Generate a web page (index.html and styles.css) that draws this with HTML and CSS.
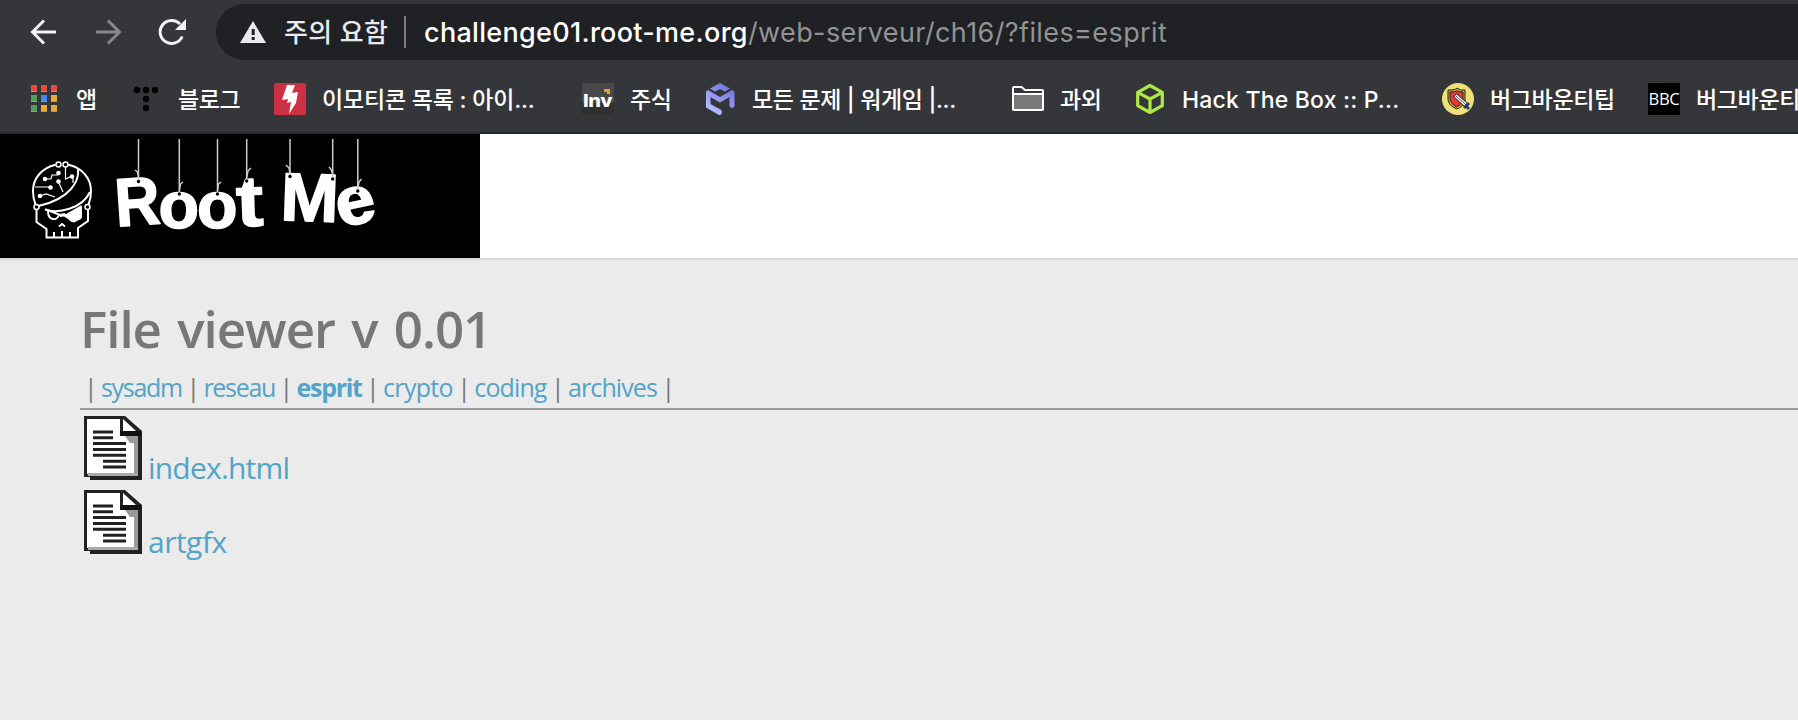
FILE: index.html
```html
<!DOCTYPE html>
<html lang="ko">
<head>
<meta charset="UTF-8" />
<title>File viewer v 0.01</title>
<link rel="stylesheet" href="styles.css">
</head>
<body>
  <header class="browser">
    <div class="toolbar">
      <svg class="nav-icon" viewBox="0 0 32 32"><path d="M28 16H5M16 4.500L4.500 16L16 27.500" /></svg>
      <svg class="nav-icon disabled" viewBox="0 0 32 32"><path d="M4 16H27M16 4.500L27.500 16L16 27.500" /></svg>
      <svg class="nav-icon" viewBox="0 0 32 32"><path d="M26.200 20.500A11.500 11.500 0 1 1 24 8" /><path class="solid" d="M30 3V14H19Z" /></svg>
      <div class="omnibox">
        <svg class="warning" viewBox="0 0 26 22"><path fill="#e8eaed" d="M13 0L26 22H0Z" /><path fill="#202124" d="M11.700 8h3v6h-3zM11.700 16h3v3h-3z" /></svg>
        <span class="security">주의 요함</span>
        <span class="divider"></span>
        <span class="url"><span class="domain">challenge01.root-me.org</span><span class="path">/web-serveur/ch16/?files=esprit</span></span>
      </div>
    </div>

    <nav class="bookmarks">
      <a class="bookmark apps">
        <svg viewBox="0 0 32 32">
          <path fill="#9c9c9c" d="M3 8h6v1H3zM13 8h6v1h-6zM23 8h6v1h-6zM3 18h6v1H3zM13 18h6v1h-6zM23 18h6v1h-6zM3 28h6v1H3zM13 28h6v1h-6zM23 28h6v1h-6z" />
          <path fill="#ea4b3c" d="M3 2h6v6H3zM13 2h6v6h-6zM23 2h6v6h-6z" />
          <path fill="#539c60" d="M3 12h6v6H3zM3 22h6v6H3z" />
          <path fill="#4389f1" d="M13 12h6v6h-6z" />
          <path fill="#e9a83a" d="M23 12h6v6h-6zM13 22h6v6h-6zM23 22h6v6h-6z" />
        </svg>
        <span>앱</span>
      </a>
      <a class="bookmark blog">
        <svg viewBox="0 0 32 32"><circle cx="7" cy="7" r="3.200" /><circle cx="16" cy="7" r="3.200" /><circle cx="25" cy="7" r="3.200" /><circle cx="16" cy="16" r="3.200" /><circle cx="16" cy="25" r="3.200" /></svg>
        <span>블로그</span>
      </a>
      <a class="bookmark wide emoticon">
        <svg viewBox="0 0 32 32"><rect width="32" height="32" rx="2" fill="#cb3143" /><path fill="#fff" d="M13 2H21L18 10L24 9L22 20L15 31L17 19L13 20L14 16L8 17Z" /></svg>
        <span>이모티콘 목록 : 아이...</span>
      </a>
      <a class="bookmark stock">
        <svg viewBox="0 0 32 32"><rect width="32" height="32" fill="#484848" /><rect y="20" width="32" height="12" fill="#303030" /><text class="inv" x="1" y="24" textLength="29" lengthAdjust="spacingAndGlyphs">Inv</text><path fill="#f0a02f" d="M22 6h6v5h-3v-2h-3z" /></svg>
        <span>주식</span>
      </a>
      <a class="bookmark wide wargame">
        <svg viewBox="0 0 32 32">
          <defs><linearGradient id="cube" x1="0" y1="1" x2="0.700" y2="0"><stop offset="0" stop-color="#bdd4ff" /><stop offset="0.500" stop-color="#9c9bf5" /><stop offset="1" stop-color="#6c76e2" /></linearGradient></defs>
          <path fill="url(#cube)" d="M16 0L26 5.500L21 8.500L16 6L11 8.500L6 5.500ZM2 8.500L4 7L16 14L28 7L30.500 8.500V23Q28 27 25.500 23V14L16 19.500L6.500 14V21L17.500 27Q19 32 15 32L2 24.500Z" />
        </svg>
        <span>모든 문제 | 워게임 |...</span>
      </a>
      <a class="bookmark tutor">
        <svg viewBox="0 0 32 32"><path fill="#77787a" d="M1 12h30v15H1z" /><path fill="none" stroke="#fff" stroke-width="2" d="M1 26V5Q1 4 2 4H9.500L13 7H30Q31 7 31 8V26Q31 27 30 27H2Q1 27 1 26ZM1 11H31" /></svg>
        <span>과외</span>
      </a>
      <a class="bookmark wide htb">
        <svg viewBox="0 0 32 32"><path fill="none" stroke="#aeea45" stroke-width="3.200" stroke-linejoin="round" d="M16 2.500L28.300 9.300V22.700L16 29.500L3.700 22.700V9.300ZM3.700 9.300L16 16L28.300 9.300M16 16V29.500" /></svg>
        <span>Hack The Box :: P...</span>
      </a>
      <a class="bookmark bounty">
        <svg viewBox="0 0 32 32">
          <circle cx="16" cy="16" r="16" fill="#efe078" />
          <path fill="#c5aa29" stroke="#222" stroke-width="1" d="M6 7Q14 7 15 5Q18 8 23 7V18Q21 24 14.500 26Q6 22 6 16Z" />
          <path fill="#e13a36" stroke="#222" stroke-width="1" d="M8 9Q14 9 15 8Q17 9 21 9V17Q19 22 14.500 24Q8 20 8 15Z" />
          <path stroke="#222" stroke-width="5" d="M13 12L25 23" /><path stroke="#fff" stroke-width="3.200" d="M13.500 12.500L24 22" /><path stroke="#222" stroke-width="0.800" d="M14 13L24 22" />
          <path stroke="#273b7a" stroke-width="3" d="M22 25L27 20M24 23L27 26" />
        </svg>
        <span>버그바운티팁</span>
      </a>
      <a class="bookmark bounty">
        <svg viewBox="0 0 32 32"><rect width="32" height="32" /><text class="bbc" x="0.500" y="22" textLength="31" lengthAdjust="spacingAndGlyphs">BBC</text></svg>
        <span>버그바운티</span>
      </a>
    </nav>
  </header>

  <div class="banner">
    <svg class="logo" viewBox="0 0 480 124">
      <rect width="480" height="124" />
      <!-- skull -->
      <g class="line">
        <path d="M55.500 30.800C42 34 33 44 33 57C33 62 34 67 35.500 70.500M68.500 30.800C83 34 91 45 91 57C91 63 90 67 88.500 70.500" />
        <path d="M38.500 72C52 69 64 63 71 55C77 48 79 42 78 35M45 75.500C58 80 82 75 90 58" />
        <path d="M36.500 76V88L46.500 95V103.500H78V94L88 87V76M54 98V103M62 97V103M70 98V103" />
        <path d="M59 92.500L62 90L65 92.500" />
        <path d="M46 75.500L60 81L65 80M48 77C48 87 57 87 59 81" />
      </g>
      <path fill="#fff" d="M60 80L66 80L80 72Q82 70 82 74V82Q82 85 79 86L74 88.500Q71 88.500 68 85L64 82.500L60 83Z" />
      <g class="thin">
        <path d="M45 45H51L52 41H58.500M35 53H50M65.500 33V45L71 42.500M58.500 48L63 58M40 62L46 60L55 63M73 43V49" />
      </g>
      <g fill="#fff"><circle cx="45" cy="45" r="2.300" /><circle cx="58.500" cy="39" r="2.300" /><circle cx="50.500" cy="53.500" r="2.300" /><circle cx="58.500" cy="47.500" r="2.300" /><circle cx="40" cy="62" r="2.300" /><circle cx="72" cy="42.500" r="2.300" /></g>
      <g class="node"><circle cx="58.500" cy="30.500" r="2.500" /><circle cx="65.500" cy="30.500" r="2.500" /><circle cx="36.500" cy="73" r="2.500" /><circle cx="87.500" cy="73" r="2.500" /></g>
      <!-- hanging letters -->
      <g class="letters">
        <text transform="translate(116.500 92.500) rotate(-4)" font-size="68" textLength="45" lengthAdjust="spacingAndGlyphs">R</text>
        <text transform="translate(158.500 93.500)" font-size="67" textLength="40.500" lengthAdjust="spacingAndGlyphs">o</text>
        <text transform="translate(197 93.500)" font-size="67" textLength="40.500" lengthAdjust="spacingAndGlyphs">o</text>
        <text transform="translate(237 92.500) rotate(-2)" font-size="72" textLength="27" lengthAdjust="spacingAndGlyphs">t</text>
        <text transform="translate(280 86) rotate(2)" font-size="68" textLength="58" lengthAdjust="spacingAndGlyphs">M</text>
        <text transform="translate(340 93.500) rotate(-12)" font-size="68" textLength="39.500" lengthAdjust="spacingAndGlyphs">e</text>
      </g>
      <g class="string"><path d="M138.500 5V46M179.300 5V58M217.500 5V58M246.700 5V45M290 5V41M332.700 5V43M357.800 5V55" /><path d="M138.500 44L137.500 38L135 36M179.300 57L180.500 50L183 48M217.500 57L218.500 50L221 48M246.700 43L248 37L251 34M290 39L289 34L286 31M332.700 41L331.500 36L329 33M357.800 54L359 48L361.500 45" /></g>
      <g><circle cx="138.500" cy="47.500" r="1.700" /><circle cx="179.300" cy="60" r="1.700" /><circle cx="217.500" cy="60" r="1.700" /><circle cx="246.700" cy="47" r="1.700" /><circle cx="290" cy="42.500" r="1.700" /><circle cx="332.700" cy="45" r="1.700" /><circle cx="357.800" cy="57" r="1.700" /></g>
    </svg>
  </div>

  <main class="viewer">
    <h1>File viewer v 0.01</h1>
    <nav class="folders">
      <i>|</i><a>sysadm</a><i>|</i><a>reseau</a><i>|</i><a class="current">esprit</a><i>|</i><a class="crypto">crypto</a><i>|</i><a class="coding">coding</a><i>|</i><a class="archives">archives</a><i>|</i>
    </nav>
    <ul class="files">
      <li>
        <svg class="doc" viewBox="0 0 58 64"><use href="#doc" /></svg>
        <a>index.html</a>
      </li>
      <li>
        <svg class="doc" viewBox="0 0 58 64"><use href="#doc" /></svg>
        <a class="short">artgfx</a>
      </li>
    </ul>
  </main>

  <svg class="sprite">
    <symbol id="doc" viewBox="0 0 58 64">
      <path fill="#222" d="M0 0H41L58 15V64H6V61H0Z" />
      <path fill="#fff" d="M3 3H36V20H53V58H3Z" />
      <path fill="#ebebeb" d="M42 0H58V14Z" />
      <path fill="#fff" d="M39 3L52 15H39Z" />
      <path fill="#999" d="M41 20H54V60H50V27H46Z" />
      <path fill="#aaa" d="M4 57H54V60H4Z" />
      <path fill="none" stroke="#222" stroke-width="1.800" stroke-dasharray="3 1.500" d="M41 2L56 15" />
      <path fill="#111" d="M36 15H57V20H36Z" />
      <path stroke="#222" stroke-width="3" d="M9 16H29M9 21.800H29M9 27.600H42M9 33.400H42M9 39.300H42M19 45.200H42M19 51H42" />
    </symbol>
  </svg>
</body>
</html>
```

FILE: styles.css
```css
* {
  box-sizing: border-box;
}
body {
  margin: 0;
  height: 720px;
  overflow: hidden;
  background: #ebebeb;
  font-family: "Open Sans", "Noto Sans CJK KR", sans-serif;
  color: #777;
}

/* browser bar */
.browser {
  height: 134px;
  background: #35363a;
  border-bottom: 2px solid #28292c;
  font-family: Inter, "Noto Sans CJK KR", sans-serif;
  color: #fff;
}
.toolbar {
  display: flex;
  align-items: center;
  height: 64px;
  padding-left: 28px;
  gap: 32px;
}
.nav-icon {
  flex: none;
  width: 32px;
  height: 32px;
  fill: none;
  stroke: #f1f3f4;
  stroke-width: 3;
}
.nav-icon .solid {
  fill: #f1f3f4;
  stroke: none;
}
.nav-icon.disabled {
  stroke: #87888a;
}
.omnibox {
  flex: 1;
  display: flex;
  align-items: center;
  height: 56px;
  margin-left: -4px;
  padding-left: 24px;
  border-radius: 28px 0 0 28px;
  background: #202124;
  white-space: nowrap;
}
.warning {
  width: 26px;
  height: 22px;
}
.security {
  width: 104px;
  margin: -3px 0 0 18px;
  font-size: 26px;
  font-weight: 500;
  letter-spacing: 0.3px;
  color: #e8eaed;
}
.divider {
  width: 2px;
  height: 32px;
  margin: 0 18px 0 16px;
  background: #777a7e;
}
.url {
  font-size: 27px;
}
.domain {
  font-weight: 500;
  letter-spacing: 0.3px;
}
.path {
  letter-spacing: 0.4px;
  color: #929395;
}

.bookmarks {
  display: flex;
  align-items: center;
  gap: 32px;
  height: 70px;
  padding-left: 28px;
}
.bookmark {
  flex: none;
  display: flex;
  align-items: center;
  gap: 16px;
  font-size: 23px;
  font-weight: 500;
  letter-spacing: -0.35px;
  color: #fff;
  white-space: nowrap;
}
.bookmark svg {
  width: 32px;
  height: 32px;
}
.bookmark span {
  width: 42px;
  margin-top: -2px;
}
.bookmark.apps span { width: 22px; }
.bookmark.blog span { width: 64px; }
.bookmark.wide span { width: 228px; }
.bookmark.bounty span { width: 126px; }
.bookmark.emoticon {
  letter-spacing: -0.2px;
}
.bookmark.htb {
  letter-spacing: 0.2px;
}
.bookmark.htb span {
  margin-top: 1px;
}
.inv {
  fill: #fff;
  font: 800 17px Inter, sans-serif;
}
.bbc {
  fill: #fff;
  font: 17px "Open Sans", sans-serif;
}

/* site banner */
.banner {
  height: 124px;
  background: #fff;
  box-shadow: 0 1px 3px rgba(0,0,0,0.15);
}
.logo {
  display: block;
  width: 480px;
  height: 124px;
}
.line, .thin, .node, .string {
  fill: none;
  stroke: #fff;
  stroke-width: 2;
}
.thin {
  stroke-width: 1.2;
}
.node {
  fill: #000;
  stroke-width: 1.5;
}
.string {
  stroke: #ccc;
  stroke-width: 1.5;
}
.letters {
  fill: #fff;
  stroke: #fff;
  stroke-width: 1.6;
  stroke-linejoin: round;
  font-family: "Liberation Sans", sans-serif;
  font-weight: 700;
}

/* file viewer */
.viewer {
  padding: 34px 0 0 80px;
}
h1 {
  margin: 0;
  font-size: 51px;
  line-height: 72px;
  font-weight: 600;
  letter-spacing: -1px;
  word-spacing: 4px;
}
.folders {
  display: flex;
  height: 44px;
  padding: 0 0 0 4px;
  font-size: 25px;
  line-height: 46px;
}
.folders i {
  width: 17px;
  font-style: normal;
}
a {
  color: #52a4c8;
}
.folders a {
  margin-right: 4.5px;
  letter-spacing: -1.3px;
}
.folders .current {
  font-weight: 700;
}
.folders .crypto {
  letter-spacing: -0.7px;
}
.folders .coding {
  letter-spacing: -0.9px;
}
.folders .archives {
  letter-spacing: -0.9px;
}
.files {
  margin: 0;
  padding: 6px 0 0 4px;
  border-top: 2px solid #9a9a9a;
  list-style: none;
}
.files li {
  display: flex;
  height: 74px;
  gap: 6px;
  font-size: 30px;
  letter-spacing: -0.8px;
}
.files .short {
  letter-spacing: -0.5px;
}
.files a {
  line-height: 42px;
  padding-top: 31px;
}
.doc {
  width: 58px;
  height: 64px;
}
.sprite {
  display: none;
}
```
